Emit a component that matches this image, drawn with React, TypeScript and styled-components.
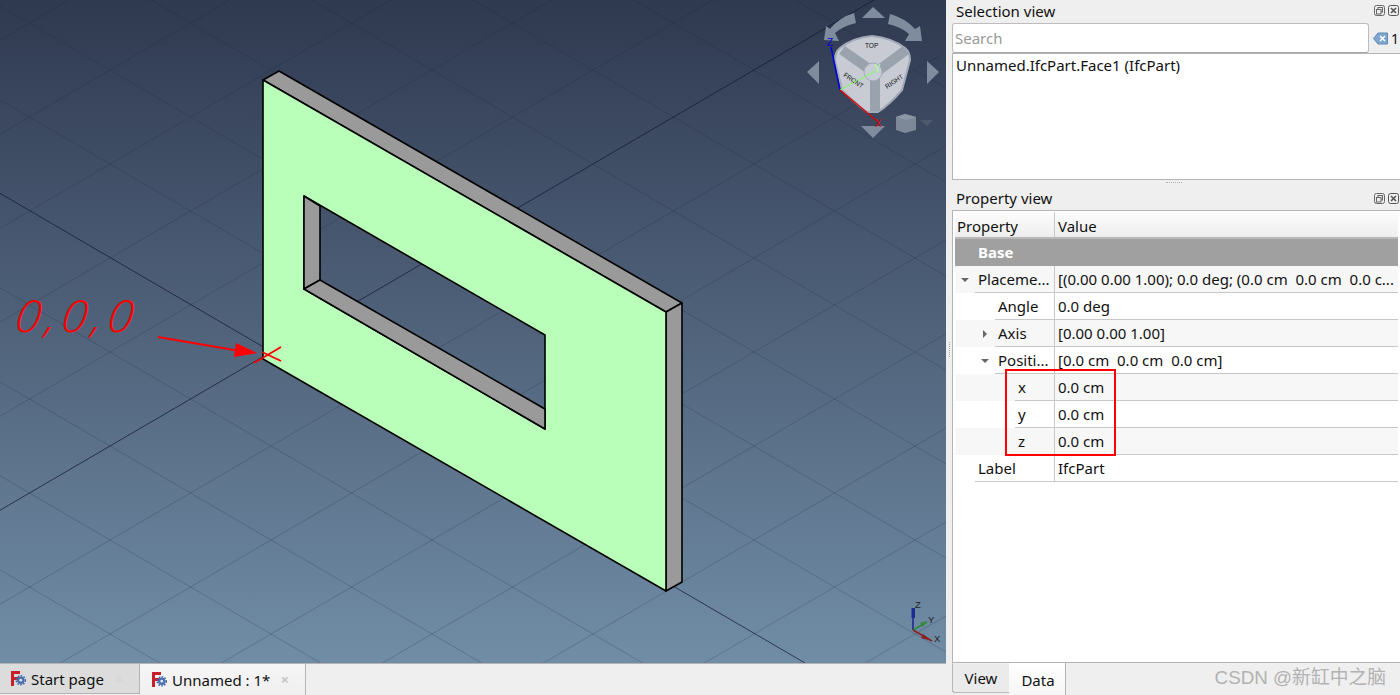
import React from 'react';
import styled, {createGlobalStyle} from 'styled-components';

const GlobalStyle = createGlobalStyle`
  html, body {
    margin: 0;
    padding: 0;
    background: #efefef;
  }
  body {
    font-family: "Noto Sans", "Liberation Sans", sans-serif;
    font-size: 15px;
    color: #111;
  }
`;

const Page = styled.div`
  display: flex;
  width: 1400px;
  height: 695px;
  overflow: hidden;
`;

const LeftPane = styled.div`
  display: flex;
  flex-direction: column;
  width: 946px;
  flex: none;
`;

const Viewport = styled.div`
  position: relative;
  height: 663px;
  flex: none;
  background: linear-gradient(#2f3950, #718da6);
  overflow: hidden;
`;

const Scene = styled.svg`
  display: block;
`;

const Handwriting = styled.div`
  position: absolute;
  left: 16px;
  top: 286px;
  font-family: "Open Sans", sans-serif;
  font-weight: 300;
  font-style: italic;
  font-size: 44px;
  line-height: 58px;
  letter-spacing: 5px;
  color: #f00;
  transform-origin: left center;
  transform: skewX(-8deg) scaleX(1.06);
`;

const TabBar = styled.div`
  display: flex;
  flex: 1;
  border-top: 1px solid #b4b4b4;
  background: #efefef;
`;

const DocTab = styled.div<{$active?: boolean}>`
  display: flex;
  align-items: center;
  box-sizing: border-box;
  width: ${p => (p.$active ? 166 : 140)}px;
  height: ${p => (p.$active ? 31 : 30)}px;
  padding-left: ${p => (p.$active ? 12 : 11)}px;
  gap: 5px;
  font-size: 15px;
  background: ${p => (p.$active ? 'linear-gradient(#f6f6f6, #efefef)' : '#dcdcdc')};
  border-right: 1px solid #b4b4b4;
  border-bottom: ${p => (p.$active ? 'none' : '1px solid #b4b4b4')};
`;

const CloseMark = styled.span<{$faint?: boolean}>`
  margin-left: auto;
  margin-right: 16px;
  font-size: 15px;
  font-weight: 700;
  line-height: 1;
  color: ${p => (p.$faint ? '#d6d6d6' : '#c6c6c6')};
`;

const RightPane = styled.div`
  position: relative;
  display: flex;
  flex-direction: column;
  flex: 1;
  background: #efefef;
`;

const SideHandle = styled.div`
  position: absolute;
  left: 3px;
  top: 342px;
  height: 15px;
  border-left: 1px dotted #aaa;
`;

const DockTitle = styled.div<{$height: number}>`
  display: flex;
  align-items: center;
  justify-content: space-between;
  box-sizing: border-box;
  height: ${p => p.$height}px;
  padding: 0 3px 2px 10px;
  font-size: 15px;
`;

const DockButtons = styled.div`
  display: flex;
  gap: 3px;
`;

const SearchRow = styled.div`
  display: flex;
  align-items: center;
  height: 30px;
  padding-left: 6px;
`;

const SearchBox = styled.div`
  box-sizing: border-box;
  flex: none;
  width: 417px;
  height: 30px;
  padding: 4px 2px;
  background: #fff;
  border: 1px solid #bdbdbd;
  border-bottom-color: #a8a8a8;
  border-radius: 3px;
  font-size: 15px;
  line-height: 20px;
  color: #9a9a9a;
`;

const SearchCount = styled.div`
  display: flex;
  align-items: center;
  gap: 3px;
  margin-left: 4px;
  font-size: 14px;
`;

const SelectionList = styled.div`
  box-sizing: border-box;
  height: 127px;
  margin: 0 1px 0 6px;
  padding: 1px 3px;
  background: #fff;
  border: 1px solid #b4b4b4;
  font-size: 15px;
  line-height: 20px;
`;

const Splitter = styled.div`
  display: flex;
  justify-content: center;
  height: 8px;
  padding-top: 2px;
  box-sizing: border-box;
  &::before {
    content: "";
    width: 16px;
    height: 0;
    border-top: 1px dotted #b0b0b0;
  }
`;

const PropertyFrame = styled.div`
  position: relative;
  box-sizing: border-box;
  height: 453px;
  margin: 0 1px 0 6px;
  padding: 1px 2px 0;
  background: #fff;
  border: 1px solid #b4b4b4;
  font-size: 15px;
`;

const HeaderRow = styled.div`
  display: flex;
  box-sizing: border-box;
  height: 27px;
  background: linear-gradient(#fdfdfd, #eeeeee);
  border-bottom: 2px solid #b8b8b8;
`;

const HeaderCell = styled.div<{$wide?: boolean}>`
  display: flex;
  align-items: center;
  box-sizing: border-box;
  width: ${p => (p.$wide ? 'auto' : '100px')};
  flex: ${p => (p.$wide ? 1 : 'none')};
  padding: 2px 0 0 ${p => (p.$wide ? 3 : 2)}px;
  border-right: ${p => (p.$wide ? 'none' : '1px solid #c8c8c8')};
`;

const GroupRow = styled.div`
  display: flex;
  align-items: center;
  box-sizing: border-box;
  height: 27px;
  padding: 0 0 2px 23px;
  background: #a0a0a0;
  color: #fff;
  font-weight: 700;
`;

const Row = styled.div<{$alt: boolean}>`
  display: flex;
  height: 27px;
  background: ${p => (p.$alt ? '#f7f7f7' : '#fff')};
`;

const Branch = styled.div<{$level: number}>`
  display: flex;
  align-items: center;
  justify-content: flex-end;
  flex: none;
  box-sizing: border-box;
  width: ${p => 20 + p.$level * 20}px;
  padding-right: 6px;
`;

const NameCell = styled.div`
  display: flex;
  align-items: center;
  flex: 1;
  min-width: 0;
  padding-left: 3px;
  box-sizing: border-box;
  border-bottom: 1px solid #c8c8c8;
  border-right: 1px solid #c8c8c8;
`;

const ValueCell = styled.div`
  display: flex;
  align-items: center;
  flex: none;
  box-sizing: border-box;
  width: 343px;
  padding-left: 3px;
  white-space: pre;
  border-bottom: 1px solid #c8c8c8;
`;

const NameArea = styled.div`
  display: flex;
  flex: none;
  width: 100px;
`;

const Arrow = styled.span<{$open: boolean}>`
  width: 0;
  height: 0;
  ${p =>
    p.$open
      ? `border-left: 4px solid transparent;
         border-right: 4px solid transparent;
         border-top: 4px solid #666;`
      : `border-top: 4px solid transparent;
         border-bottom: 4px solid transparent;
         border-left: 4px solid #666;
         margin-right: 2px;`}
`;

const Highlight = styled.div`
  position: absolute;
  left: 52px;
  top: 158px;
  width: 107px;
  height: 83px;
  border: 2px solid #f00;
`;

const BottomTabs = styled.div`
  display: flex;
  flex: 1;
  padding-left: 6px;
`;

const SideTab = styled.div<{$active?: boolean}>`
  display: flex;
  align-items: center;
  justify-content: center;
  box-sizing: border-box;
  width: 57px;
  height: ${p => (p.$active ? 32 : 30)}px;
  font-size: 15px;
  background: ${p => (p.$active ? 'linear-gradient(#fff, #f6f6f6)' : '#ebebeb')};
  border: ${p => (p.$active ? 'none' : '1px solid #b8b8b8')};
  border-right: ${p => (p.$active ? '1px solid #b4b4b4' : 'none')};
  border-top: ${p => (p.$active ? 'none' : '1px solid #efefef')};
  border-radius: ${p => (p.$active ? '0' : '0 0 0 3px')};
  padding: ${p => (p.$active ? '1px 0 0 2px' : '0')};
`;

const Watermark = styled.div`
  margin: -3px 16px 0 auto;
  font-family: "Liberation Sans", "Noto Sans CJK SC", sans-serif;
  font-size: 18.8px;
  line-height: 28px;
  color: #b2b2b2;
`;

const SideFill = styled.div`
  display: flex;
  flex: 1;
  align-items: center;
`;

const CX = 271;
const CY = 352;
const UX = 80.5;
const UY = 47;

const gridLines = () => {
  const lines: React.ReactNode[] = [];
  for (let a = -14; a <= 14; a++) {
    const main = a === 0;
    const stroke = main ? 'rgba(20,20,50,.7)' : 'rgba(30,30,60,.22)';
    const x = CX + a * UX;
    const y1 = CY + a * UY;
    const y2 = CY - a * UY;
    lines.push(<line key={`v${a}`} x1={x - 20 * UX} y1={y1 + 20 * UY} x2={x + 20 * UX} y2={y1 - 20 * UY} stroke={stroke}/>);
    lines.push(<line key={`u${a}`} x1={x - 20 * UX} y1={y2 - 20 * UY} x2={a === 0 ? 805 : x + 20 * UX} y2={a === 0 ? 663 : y2 + 20 * UY} stroke={stroke}/>);
  }
  return lines;
};

const Wall = () => (
  <g stroke="#000" strokeWidth={1.6} strokeLinejoin="round">
    <path d="M263 80L279 71L682 303L666 312Z" fill="#9a9a9a"/>
    <path d="M666 312L682 303V582L666 591Z" fill="#9a9a9a"/>
    <path
      fillRule="evenodd"
      d="M263 80L666 312V591L263 359Z M304 196V289L545 429V335Z"
      fill="#b9ffb9"
    />
    <path d="M304 196L320 206V280L304 289Z" fill="#9a9a9a"/>
    <path d="M304 289L320 280L545 409V429Z" fill="#9a9a9a"/>
  </g>
);

const Annotation = () => (
  <g stroke="#f00" fill="none">
    <path d="M158 337L240 351" strokeWidth={2}/>
    <path d="M236 343L234 357L257 353Z" fill="#f00" stroke="none"/>
    <path d="M254 363L281 347M262 352L281 361" strokeWidth={1.8}/>
  </g>
);

const NaviCube = () => (
  <g>
    <g fill="#7f8c9d">
      <path d="M862 18H885L873 7Z"/>
      <path d="M861 126H885L873 138Z"/>
      <path d="M819 61V84L807 72Z"/>
      <path d="M927 61V84L939 72Z"/>
      <path d="M854 13L856 23Q843 26 835 33L839 41L824 40L826 26L830 29Q840 17 854 13Z"/>
      <path d="M890 14L888 24Q901 27 909 34L905 41L922 41L920 26L915 29Q905 18 890 14Z"/>
    </g>
    <path
      d="M872 36Q852 38 840 48Q835 52 835 60L842 90Q856 104 867 112H878Q890 104 902 90L910 60Q910 52 905 48Q892 38 872 36Z"
      fill="#c8cbd3"
      stroke="#a3abb8"
      strokeWidth={2}
    />
    <path d="M842 50L875 73L906 50M875 73V111" fill="none" stroke="#9aa2ae" strokeWidth={10}/>
    <circle cx={873} cy={72} r={9} fill="#c6cdd6" stroke="#a3abb8"/>
    <g fontFamily="Liberation Sans, sans-serif" fontSize={6.5} fill="#111">
      <text x={865} y={48}>TOP</text>
      <text x={843} y={76} transform="rotate(34 843 76)">FRONT</text>
      <text x={887} y={89} transform="rotate(-34 887 89)">RIGHT</text>
    </g>
    <path d="M840 90L831 47" stroke="#0000e0" strokeWidth={1.5}/>
    <path d="M840 90L877 70" stroke="#7cff5a" strokeWidth={1.2} strokeDasharray="3 1"/>
    <path d="M840 90L877 121" stroke="#e00000" strokeWidth={1.2}/>
    <g fontFamily="Liberation Sans, sans-serif" fontSize={10}>
      <text x={827} y={46} fill="#0000e0">Z</text>
      <text x={874} y={72} fill="#b5ffa0">Y</text>
      <text x={875} y={127} fill="#e00000">X</text>
    </g>
    <path d="M905 114L916 117V130L905 133L896 130V117Z" fill="#7d8998"/>
    <path d="M905 114L916 117L906 120L896 117Z" fill="#8d98a6"/>
    <path d="M920 120H933L927 126Z" fill="#4d5a6d"/>
  </g>
);

const MiniAxes = () => (
  <g>
    <path d="M913 630V610" stroke="#1d2a8e" strokeWidth={1.6}/>
    <path d="M911.5 608H915V618H911.5Z" fill="#1d2a8e"/>
    <path d="M913 630L927 622" stroke="#2f8a3a" strokeWidth={1.6}/>
    <path d="M920 623L927 621L923 627Z" fill="#2f8a3a"/>
    <path d="M913 630L932 641" stroke="#8a2222" strokeWidth={1.6}/>
    <path d="M923 634L932 641L921 638Z" fill="#8a2222"/>
    <g fontFamily="Liberation Sans, sans-serif" fontSize={9.5} fill="#222">
      <text x={915} y={608}>Z</text>
      <text x={928} y={623}>Y</text>
      <text x={934} y={642}>X</text>
    </g>
  </g>
);

const FreeCadIcon = () => (
  <svg width="15" height="17" viewBox="0 0 15 17">
    <path d="M0 1H9V4H3V7H8V10H3V16H0Z" fill="#c8202a"/>
    <circle cx="9.8" cy="10.2" r="3.4" fill="#4a6fb0" stroke="#4a6fb0" strokeWidth="1"/>
    <circle cx="9.8" cy="10.2" r="4.6" fill="none" stroke="#3f63a6" strokeWidth="1.4" strokeDasharray="1.6 1.4"/>
    <circle cx="9.8" cy="10.2" r="1.4" fill="#dfe6f2"/>
  </svg>
);

const FloatIcon = () => (
  <svg width="11" height="11" viewBox="0 0 11 11" fill="none" stroke="#666">
    <rect x=".5" y=".5" width="10" height="10" rx="2"/>
    <rect x="4" y="2.5" width="4.5" height="4.5"/>
    <rect x="2.5" y="4.5" width="4.5" height="4.5" fill="#efefef"/>
  </svg>
);

const CloseIcon = () => (
  <svg width="11" height="11" viewBox="0 0 11 11" fill="none" stroke="#555">
    <rect x=".5" y=".5" width="10" height="10" rx="2"/>
    <path d="M3 3L8 8M8 3L3 8" strokeWidth="1.6"/>
  </svg>
);

const ClearIcon = () => (
  <svg width="15" height="13" viewBox="0 0 15 13">
    <path d="M5 1H14.5V12H5L0.5 6.5Z" fill="#7fa6cf" stroke="#5f88b3"/>
    <path d="M7 4L12 9M12 4L7 9" stroke="#fff" strokeWidth="1.5"/>
  </svg>
);

const DockControls = () => (
  <DockButtons>
    <FloatIcon/>
    <CloseIcon/>
  </DockButtons>
);

type Prop = {
  name: string;
  value: string;
  level: number;
  arrow?: 'open' | 'closed';
};

const props: Prop[] = [
  {name: 'Placeme...', value: '[(0.00 0.00 1.00); 0.0 deg; (0.0 cm  0.0 cm  0.0 c...', level: 0, arrow: 'open'},
  {name: 'Angle', value: '0.0 deg', level: 1},
  {name: 'Axis', value: '[0.00 0.00 1.00]', level: 1, arrow: 'closed'},
  {name: 'Positi...', value: '[0.0 cm  0.0 cm  0.0 cm]', level: 1, arrow: 'open'},
  {name: 'x', value: '0.0 cm', level: 2},
  {name: 'y', value: '0.0 cm', level: 2},
  {name: 'z', value: '0.0 cm', level: 2},
  {name: 'Label', value: 'IfcPart', level: 0},
];

const App = () => {
  return (
    <Page>
      <GlobalStyle/>
      <LeftPane>
        <Viewport>
          <Scene width="946" height="663" viewBox="0 0 946 663">
            {gridLines()}
            <Wall/>
            <Annotation/>
            <NaviCube/>
            <MiniAxes/>
          </Scene>
          <Handwriting>0,0,0</Handwriting>
        </Viewport>
        <TabBar>
          <DocTab>
            <FreeCadIcon/>
            Start page
            <CloseMark $faint>×</CloseMark>
          </DocTab>
          <DocTab $active>
            <FreeCadIcon/>
            Unnamed : 1*
            <CloseMark>×</CloseMark>
          </DocTab>
        </TabBar>
      </LeftPane>
      <RightPane>
        <SideHandle/>
        <DockTitle $height={23}>
          Selection view
          <DockControls/>
        </DockTitle>
        <SearchRow>
          <SearchBox>Search</SearchBox>
          <SearchCount>
            <ClearIcon/>
            1
          </SearchCount>
        </SearchRow>
        <SelectionList>Unnamed.IfcPart.Face1 (IfcPart)</SelectionList>
        <Splitter/>
        <DockTitle $height={22}>
          Property view
          <DockControls/>
        </DockTitle>
        <PropertyFrame>
          <HeaderRow>
            <HeaderCell>Property</HeaderCell>
            <HeaderCell $wide>Value</HeaderCell>
          </HeaderRow>
          <GroupRow>Base</GroupRow>
          {props.map((p, i) => (
            <Row key={p.name} $alt={i % 2 === 0}>
              <NameArea>
                <Branch $level={p.level}>
                  {p.arrow && <Arrow $open={p.arrow === 'open'}/>}
                </Branch>
                <NameCell>{p.name}</NameCell>
              </NameArea>
              <ValueCell>{p.value}</ValueCell>
            </Row>
          ))}
          <Highlight/>
        </PropertyFrame>
        <BottomTabs>
          <SideTab>View</SideTab>
          <SideTab $active>Data</SideTab>
          <SideFill>
            <Watermark>CSDN @新缸中之脑</Watermark>
          </SideFill>
        </BottomTabs>
      </RightPane>
    </Page>
  );
};

export default App;
